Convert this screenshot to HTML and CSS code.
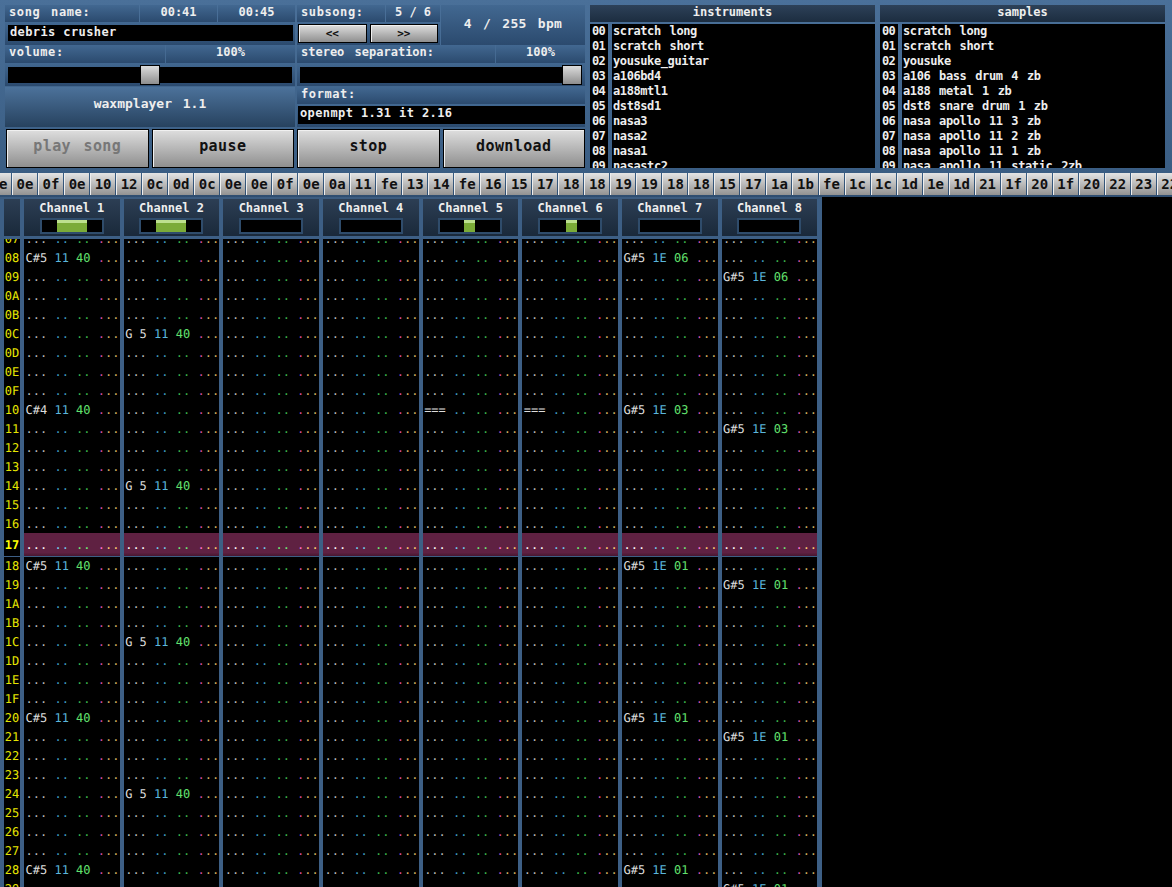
FILE: index.html
```html
<!DOCTYPE html>
<html lang="en">
<head>
<meta charset="utf-8">
<title>waxmplayer</title>
<link rel="stylesheet" href="styles.css">
</head>
<body>
<header class="top">
  <section class="player">
    <div class="player-cols">
      <div class="col">
        <div class="line line-head">
          <div class="panel label grow">song name:</div>
          <div class="panel value w-time">00:41</div>
          <div class="panel value w-time">00:45</div>
        </div>
        <div class="panel field-wrap"><div class="field">debris crusher</div></div>
        <div class="line line-label">
          <div class="panel label grow">volume:</div>
          <div class="panel value w-pct-l">100%</div>
        </div>
        <div class="panel slider-wrap">
          <div class="slider"><span class="knob knob-vol"></span></div>
        </div>
        <div class="panel title">waxmplayer 1.1</div>
      </div>
      <div class="col">
        <div class="sub-block">
          <div class="sub-left">
            <div class="line line-head">
              <div class="panel label grow">subsong:</div>
              <div class="panel value w-sub">5 / 6</div>
            </div>
            <div class="panel nav">
              <button class="btn nav-btn">&lt;&lt;</button>
              <button class="btn nav-btn">&gt;&gt;</button>
            </div>
          </div>
          <div class="panel bpm">4 / 255 bpm</div>
        </div>
        <div class="line line-label">
          <div class="panel label label-tight grow">stereo separation:</div>
          <div class="panel value w-pct-r">100%</div>
        </div>
        <div class="panel slider-wrap">
          <div class="slider"><span class="knob knob-sep"></span></div>
        </div>
        <div class="panel label format-label">format:</div>
        <div class="panel format-wrap"><div class="field">openmpt 1.31 it 2.16</div></div>
      </div>
    </div>
    <div class="actions">
      <button class="btn action disabled">play song</button>
      <button class="btn action">pause</button>
      <button class="btn action">stop</button>
      <button class="btn action">download</button>
    </div>
  </section>
  <section class="library">
    <h2 class="lib-title">instruments</h2>
    <div class="lib-body">
      <ol class="lib-nums"><li>00</li><li>01</li><li>02</li><li>03</li><li>04</li><li>05</li><li>06</li><li>07</li><li>08</li><li>09</li></ol>
      <ul class="lib-names"><li>scratch long</li><li>scratch short</li><li>yousuke_guitar</li><li>a106bd4</li><li>a188mtl1</li><li>dst8sd1</li><li>nasa3</li><li>nasa2</li><li>nasa1</li><li>nasastc2</li></ul>
    </div>
  </section>
  <section class="library">
    <h2 class="lib-title">samples</h2>
    <div class="lib-body">
      <ol class="lib-nums"><li>00</li><li>01</li><li>02</li><li>03</li><li>04</li><li>05</li><li>06</li><li>07</li><li>08</li><li>09</li></ol>
      <ul class="lib-names"><li>scratch long</li><li>scratch short</li><li>yousuke</li><li>a106 bass drum 4 zb</li><li>a188 metal 1 zb</li><li>dst8 snare drum 1 zb</li><li>nasa apollo 11 3 zb</li><li>nasa apollo 11 2 zb</li><li>nasa apollo 11 1 zb</li><li>nasa apollo 11 static 2zb</li></ul>
    </div>
  </section>
</header>
<nav class="orders">
  <button class="ord">0e</button><button class="ord">0e</button><button class="ord">0f</button><button class="ord">0e</button><button class="ord">10</button><button class="ord">12</button><button class="ord">0c</button><button class="ord">0d</button><button class="ord">0c</button><button class="ord">0e</button><button class="ord">0e</button><button class="ord">0f</button><button class="ord">0e</button><button class="ord">0a</button><button class="ord">11</button><button class="ord">fe</button><button class="ord">13</button><button class="ord">14</button><button class="ord">fe</button><button class="ord">16</button><button class="ord">15</button><button class="ord">17</button><button class="ord">18</button><button class="ord">18</button><button class="ord">19</button><button class="ord">19</button><button class="ord">18</button><button class="ord">18</button><button class="ord">15</button><button class="ord">17</button><button class="ord">1a</button><button class="ord">1b</button><button class="ord">fe</button><button class="ord">1c</button><button class="ord">1c</button><button class="ord">1d</button><button class="ord">1e</button><button class="ord">1d</button><button class="ord">21</button><button class="ord">1f</button><button class="ord">20</button><button class="ord">1f</button><button class="ord">20</button><button class="ord">22</button><button class="ord">23</button><button class="ord">22</button>
</nav>
<main class="tracker">
  <div class="channels">
    <div class="ch-corner"></div>
    <div class="ch"><div class="ch-name">Channel 1</div><div class="vu"><span class="vu-bar vu-1"></span></div></div>
    <div class="ch"><div class="ch-name">Channel 2</div><div class="vu"><span class="vu-bar vu-1"></span></div></div>
    <div class="ch"><div class="ch-name">Channel 3</div><div class="vu"></div></div>
    <div class="ch"><div class="ch-name">Channel 4</div><div class="vu"></div></div>
    <div class="ch"><div class="ch-name">Channel 5</div><div class="vu"><span class="vu-bar vu-5"></span></div></div>
    <div class="ch"><div class="ch-name">Channel 6</div><div class="vu"><span class="vu-bar vu-6"></span></div></div>
    <div class="ch"><div class="ch-name">Channel 7</div><div class="vu"></div></div>
    <div class="ch"><div class="ch-name">Channel 8</div><div class="vu"></div></div>
  </div>
  <div class="pattern" id="pattern"></div>
</main>
<script src="app.js"></script>
</body>
</html>
```
FILE: styles.css
```css
* { box-sizing: border-box; }
html, body { margin: 0; height: 100%; background: #000; overflow: hidden; }
body { font-family: "DejaVu Sans Mono", monospace; color: #eee; }

.top {
  display: flex;
  height: 172px;
  padding: 5px 0 0 5px;
  background: linear-gradient(#4a7099, #3a5d83);
  overflow: hidden;
}
.player { width: 580px; flex: none; display: flex; flex-direction: column; }
.player-cols { display: flex; gap: 2px; height: 122px; }
.col { width: 290px; display: flex; flex-direction: column; }
.col + .col { width: 288px; }

.panel { background: linear-gradient(#426891, #2b4a6e); }
.line { display: flex; gap: 1px; }
.line-head { height: 17px; }
.line-label { height: 18px; }
.grow { flex: 1; }
.label {
  font-size: 12px;
  font-weight: bold;
  line-height: 14px;
  padding-left: 4px;
  letter-spacing: .6px;
  word-spacing: 3px;
  white-space: nowrap;
}
.label-tight { letter-spacing: 0; }
.value {
  font-size: 12px;
  font-weight: bold;
  line-height: 14px;
  text-align: center;
}
.w-time { width: 77px; }
.w-pct-l { width: 129px; }
.w-pct-r { width: 89px; }
.w-sub { width: 54px; }

.field-wrap { height: 23px; padding: 3px 2px 4px 3px; }
.field {
  height: 100%;
  background: #000;
  padding-left: 2px;
  font-size: 12px;
  font-weight: bold;
  line-height: 15px;
  letter-spacing: .4px;
  white-space: nowrap;
}
.slider-wrap { height: 23px; padding: 4px 3px; }
.slider { position: relative; height: 16px; background: #000; }
.knob {
  position: absolute;
  top: -2px;
  width: 20px;
  height: 20px;
  background: linear-gradient(#dcdcdc, #8e8e8e);
  border: 1px solid #000;
}
.knob-vol { left: 132px; }
.knob-sep { right: 0; }
.title {
  height: 40px;
  margin-top: 1px;
  background: linear-gradient(#4c729b, #27425f);
  text-align: center;
  font-size: 13px;
  font-weight: bold;
  line-height: 34px;
  word-spacing: 3px;
}
.sub-block { display: flex; gap: 1px; height: 40px; }
.sub-left { width: 143px; }
.nav { height: 23px; display: flex; gap: 3px; padding: 2px 2px 2px 1px; }
.nav-btn { flex: 1; font-size: 11px; line-height: 1; }
.bpm {
  flex: 1;
  text-align: center;
  font-size: 13px;
  font-weight: bold;
  line-height: 38px;
  letter-spacing: .3px;
  word-spacing: 3px;
}
.format-label { height: 17px; margin-top: 1px; }
.format-wrap { height: 23px; padding: 2px 0 3px 1px; }

.btn {
  display: block;
  padding: 0;
  border: 1px solid #000;
  color: #111;
  font-family: inherit;
  font-weight: bold;
  background: linear-gradient(#dedede, #8f8f8f);
  box-shadow: inset 1px 1px 0 #f0f0f0;
}
.actions { display: flex; gap: 3px; padding-left: 1px; margin-top: 2px; }
.action {
  flex: 1;
  height: 39px;
  padding-bottom: 5px;
  font-size: 15px;
  letter-spacing: .4px;
  word-spacing: 3px;
}
.disabled { color: #777; }

.library {
  width: 285px;
  flex: none;
  margin-left: 5px;
  display: flex;
  flex-direction: column;
}
.lib-title {
  margin: 0;
  height: 17px;
  flex: none;
  background: linear-gradient(#2d4158, #1c2d40);
  color: #eee;
  font-size: 12px;
  font-weight: bold;
  line-height: 14px;
  text-align: center;
}
.lib-body { flex: none; display: flex; gap: 4px; margin-top: 2px; overflow: hidden; height: 144px; }
.lib-nums, .lib-names {
  margin: 0;
  padding: 0;
  list-style: none;
  background: #000;
  font-size: 12px;
  font-weight: bold;
  line-height: 15px;
  white-space: nowrap;
}
.lib-nums { width: 18px; padding: 0 0 0 2px; letter-spacing: -.6px; }
.lib-names { flex: 1; padding-left: 1px; letter-spacing: -.4px; word-spacing: 2px; }

.orders {
  display: flex;
  gap: 1px;
  height: 25px;
  padding: 1px 0 2px;
  margin-left: -14px;
  background: linear-gradient(#3a5d83, #2e4d70);
  overflow: hidden;
}
.ord {
  flex: none;
  width: 25.025px;
  padding: 0;
  border: 0;
  border-left: 1px solid #eee;
  color: #111;
  font-family: inherit;
  font-size: 14px;
  font-weight: bold;
  background: linear-gradient(#e4e4e4, #929292);
}

.tracker {
  width: 822px;
  height: 690px;
  border-top: 2px solid #3c5c80;
  background: #3d5f85;
  padding-left: 4px;
  overflow: hidden;
}
.channels, .row {
  display: grid;
  grid-template-columns: 16px repeat(8, 95.67px);
  column-gap: 4px;
}
.channels { height: 37px; }
.ch-corner, .ch { background: linear-gradient(#2c3e54, #1a293a); }
.ch { display: flex; flex-direction: column; align-items: center; }
.ch-name { font-size: 12px; font-weight: bold; line-height: 19px; white-space: pre; }
.vu {
  position: relative;
  width: 64px;
  height: 16px;
  background: #000;
  border: 2px solid #2f4c6b;
  flex: none;
}
.vu-bar {
  position: absolute;
  top: 0;
  bottom: 0;
  background: linear-gradient(#bde08e 0, #bde08e 25%, #7bab38 25%, #7bab38 100%);
}
.vu-1 { left: 15px; width: 30px; }
.vu-5 { left: 24px; width: 11px; }
.vu-6 { left: 26px; width: 11px; }

.pattern { height: 651px; margin-top: 3px; overflow: hidden; }
.pattern-inner { margin-top: -9px; }
.row { height: 19px; }
.num, .cell {
  background: #000;
  font-size: 12px;
  line-height: 19px;
  white-space: pre;
  overflow: hidden;
  text-rendering: geometricPrecision;
}
.num { color: #e6e600; text-align: center; }
.cell { padding-left: 1.5px; }
.n { color: #ddd; }
.i { color: #5ab6dc; }
.v { color: #62e06e; }
.e1 { color: #d250a4; }
.e2 { color: #d0b060; }
.empty.n { color: #b8b8b8; }
.empty.i { color: #3f9cc0; }
.empty.v { color: #3cb44c; }

.row-now { height: 23px; margin-top: -1px; margin-bottom: 1px; }
.row-now .cell, .row-now .num { line-height: 25px; }
.row-now .cell { background: linear-gradient(#5f2142 0, #5f2142 85%, #471730 100%); }
.row-now .num { color: #ffff00; font-weight: bold; background: #000; }
.row-now .empty.n { color: #fff; }
.row-now .empty.i { color: #74d0f4; }
.row-now .empty.v { color: #70f078; }
.row-now .e1 { color: #ff70d0; }
.row-now .e2 { color: #ffcf70; }
```
FILE: app.js
```js
// Pattern data: row index (hex label) -> { channel: [note, instrument, volume] }
var ROWS = ['07','08','09','0A','0B','0C','0D','0E','0F','10','11','12','13','14','15','16','17','18','19','1A','1B','1C','1D','1E','1F','20','21','22','23','24','25','26','27','28','29'];
var NOTES = {
  '08': { 0: ['C#5','11','40'], 6: ['G#5','1E','06'] },
  '09': { 7: ['G#5','1E','06'] },
  '0C': { 1: ['G 5','11','40'] },
  '10': { 0: ['C#4','11','40'], 4: ['===','',''], 5: ['===','',''], 6: ['G#5','1E','03'] },
  '11': { 7: ['G#5','1E','03'] },
  '14': { 1: ['G 5','11','40'] },
  '18': { 0: ['C#5','11','40'], 6: ['G#5','1E','01'] },
  '19': { 7: ['G#5','1E','01'] },
  '1C': { 1: ['G 5','11','40'] },
  '20': { 0: ['C#5','11','40'], 6: ['G#5','1E','01'] },
  '21': { 7: ['G#5','1E','01'] },
  '24': { 1: ['G 5','11','40'] },
  '28': { 0: ['C#5','11','40'], 6: ['G#5','1E','01'] },
  '29': { 7: ['G#5','1E','01'] }
};
var CURRENT = '17';

function span(cls, text) {
  var s = document.createElement('span');
  s.className = cls;
  s.textContent = text;
  return s;
}

function buildCell(data) {
  var cell = document.createElement('div');
  cell.className = 'cell';
  var note = data ? data[0] : '...';
  var ins = data && data[1] ? data[1] : '..';
  var vol = data && data[2] ? data[2] : '..';
  cell.appendChild(span('n' + (data ? '' : ' empty'), note));
  cell.appendChild(document.createTextNode(' '));
  cell.appendChild(span('i' + (data && data[1] ? '' : ' empty'), ins));
  cell.appendChild(document.createTextNode(' '));
  cell.appendChild(span('v' + (data && data[2] ? '' : ' empty'), vol));
  cell.appendChild(document.createTextNode(' '));
  cell.appendChild(span('e1', '.'));
  cell.appendChild(span('e2', '..'));
  return cell;
}

var inner = document.createElement('div');
inner.className = 'pattern-inner';
ROWS.forEach(function (label) {
  var row = document.createElement('div');
  row.className = 'row' + (label === CURRENT ? ' row-now' : '');
  var num = document.createElement('div');
  num.className = 'num';
  num.textContent = label;
  row.appendChild(num);
  for (var c = 0; c < 8; c++) {
    row.appendChild(buildCell(NOTES[label] && NOTES[label][c]));
  }
  inner.appendChild(row);
});
document.getElementById('pattern').appendChild(inner);
```
